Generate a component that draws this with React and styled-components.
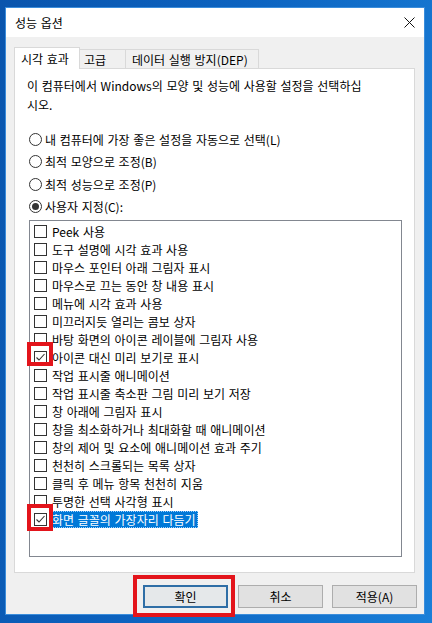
import styled, { createGlobalStyle } from 'styled-components';

const GlobalStyle = createGlobalStyle`
  html, body {
    margin: 0;
    padding: 0;
  }
  body {
    font-family: "Noto Sans CJK KR", "Malgun Gothic", sans-serif;
    font-size: 12px;
    word-spacing: 1px;
    color: #000;
  }
`

const Stage = styled.div`
  position: relative;
  width: 432px;
  height: 623px;
  box-sizing: border-box;
  padding: 7px 7px 0 5px;
  background: linear-gradient(100deg, #0a55ad 0%, #0c63c0 45%, #1a7fd8 100%);
  overflow: hidden;
`

const Window = styled.div`
  width: 420px;
  height: 608px;
  box-sizing: border-box;
  border: 1px solid #3b8ddb;
  background: #f0f0f0;
  display: flex;
  flex-direction: column;
`

const TitleBar = styled.div`
  height: 29px;
  flex: none;
  background: #fff;
  display: flex;
  align-items: center;
  justify-content: space-between;
  padding: 0 9px;
`

const Body = styled.div`
  flex: 1;
  display: flex;
  flex-direction: column;
  padding: 10px 9px 6px 8px;
  min-height: 0;
`

const TabRow = styled.div`
  display: flex;
  align-items: flex-start;
  height: 22px;
  margin-bottom: -1px;
  position: relative;
  z-index: 1;
`

const Tab = styled.div`
  box-sizing: border-box;
  width: ${p => p.$w}px;
  height: ${p => (p.$active ? 22 : 19)}px;
  margin-top: ${p => (p.$active ? 0 : 2)}px;
  padding-left: ${p => p.$pad}px;
  display: flex;
  align-items: center;
  border: 1px solid #d9d9d9;
  border-bottom: none;
  border-left: ${p => (p.$first || p.$active ? '1px solid #d9d9d9' : 'none')};
  background: ${p => (p.$active ? '#fff' : '#f0f0f0')};
  white-space: nowrap;
`

const Panel = styled.div`
  flex: 1;
  box-sizing: border-box;
  border: 1px solid #d9d9d9;
  background: #fff;
  padding: 7px 12px 0 12px;
  display: flex;
  flex-direction: column;
  min-height: 0;
`

const Desc = styled.p`
  margin: 0;
  line-height: 19px;
`

const RadioGroup = styled.div`
  margin: 14px 0 0 2px;
  display: flex;
  flex-direction: column;
`

const RadioRow = styled.label`
  height: 22.5px;
  display: flex;
  align-items: center;
  gap: 3px;
`

const RadioCircle = styled.span`
  width: 13px;
  height: 13px;
  box-sizing: border-box;
  border: 1px solid #333;
  border-radius: 50%;
  background: #fff;
  display: flex;
  align-items: center;
  justify-content: center;
  &::after {
    content: '';
    display: ${p => (p.$on ? 'block' : 'none')};
    width: 7px;
    height: 7px;
    border-radius: 50%;
    background: #333;
  }
`

const ListBox = styled.div`
  margin: 2px 0 0 2px;
  width: 373px;
  height: 337px;
  box-sizing: border-box;
  border: 1px solid #828790;
  padding-top: 1px;
  background: #fff;
`

const ItemRow = styled.div`
  height: 18px;
  display: flex;
  align-items: center;
  padding-left: 4px;
  gap: 5px;
`

const CheckBox = styled.span`
  flex: none;
  width: 13px;
  height: 13px;
  box-sizing: border-box;
  border: 1px solid #333;
  background: #fff;
  display: flex;
  align-items: center;
  justify-content: center;
`

const ItemLabel = styled.span`
  height: 17px;
  display: flex;
  align-items: center;
  white-space: nowrap;
  margin-left: ${p => (p.$sel ? -1 : 0)}px;
  padding: 0 ${p => (p.$sel ? 2 : 0)}px 0 ${p => (p.$sel ? 1 : 0)}px;
  background: ${p => (p.$sel ? '#0078d7' : 'transparent')};
  color: ${p => (p.$sel ? '#fff' : '#000')};
  outline: ${p => (p.$sel ? '1px dotted #9fd0ff' : 'none')};
  outline-offset: -1px;
`

const ButtonRow = styled.div`
  margin: 12px -2px 0 0;
  height: 23px;
  display: flex;
  justify-content: flex-end;
  gap: 10px;
`

const Button = styled.button`
  width: 85px;
  height: 23px;
  box-sizing: border-box;
  font: inherit;
  word-spacing: inherit;
  color: #000;
  background: ${p => (p.$default ? '#e5e8ea' : '#e1e1e1')};
  border: ${p => (p.$default ? '2px solid #2f6ea6' : '1px solid #adadad')};
  padding: 0;
  &:last-child { margin-left: -1px; }
`

const Marker = styled.div`
  position: absolute;
  box-sizing: border-box;
  left: ${p => p.$x}px;
  top: ${p => p.$y}px;
  width: ${p => p.$w}px;
  height: ${p => p.$h}px;
  border: 4px solid #e3141b;
  pointer-events: none;
`

function CloseIcon(){
  return (
    <svg width="11" height="11" viewBox="0 0 11 11">
      <path d="M0.5 0.5 L10.5 10.5 M10.5 0.5 L0.5 10.5" stroke="#111" strokeWidth="1" />
    </svg>
  )
}

function Check(){
  return (
    <svg width="11" height="11" viewBox="0 0 11 11">
      <path d="M1.5 5.5 L4 8 L9.5 2" fill="none" stroke="#333" strokeWidth="1.1" />
    </svg>
  )
}

const radios = [
  { text: '내 컴퓨터에 가장 좋은 설정을 자동으로 선택(L)', on: false },
  { text: '최적 모양으로 조정(B)', on: false },
  { text: '최적 성능으로 조정(P)', on: false },
  { text: '사용자 지정(C):', on: true },
]

const items = [
  { text: 'Peek 사용' },
  { text: '도구 설명에 시각 효과 사용' },
  { text: '마우스 포인터 아래 그림자 표시' },
  { text: '마우스로 끄는 동안 창 내용 표시' },
  { text: '메뉴에 시각 효과 사용' },
  { text: '미끄러지듯 열리는 콤보 상자' },
  { text: '바탕 화면의 아이콘 레이블에 그림자 사용' },
  { text: '아이콘 대신 미리 보기로 표시', checked: true },
  { text: '작업 표시줄 애니메이션' },
  { text: '작업 표시줄 축소판 그림 미리 보기 저장' },
  { text: '창 아래에 그림자 표시' },
  { text: '창을 최소화하거나 최대화할 때 애니메이션' },
  { text: '창의 제어 및 요소에 애니메이션 효과 주기' },
  { text: '천천히 스크롤되는 목록 상자' },
  { text: '클릭 후 메뉴 항목 천천히 지움' },
  { text: '투명한 선택 사각형 표시' },
  { text: '화면 글꼴의 가장자리 다듬기', checked: true, selected: true },
]

export default function App(){
  return (
    <Stage>
      <GlobalStyle />
      <Window>
        <TitleBar>
          <span>성능 옵션</span>
          <CloseIcon />
        </TitleBar>
        <Body>
          <TabRow>
            <Tab $active $w={66} $pad={6}>시각 효과</Tab>
            <Tab $w={46} $pad={4}>고급</Tab>
            <Tab $w={133} $pad={6}>데이터 실행 방지(DEP)</Tab>
          </TabRow>
          <Panel>
            <Desc>이 컴퓨터에서 Windows의 모양 및 성능에 사용할 설정을 선택하십<br />시오.</Desc>
            <RadioGroup>
              {radios.map(r => (
                <RadioRow key={r.text}>
                  <RadioCircle $on={r.on} />
                  <span>{r.text}</span>
                </RadioRow>
              ))}
            </RadioGroup>
            <ListBox>
              {items.map(it => (
                <ItemRow key={it.text}>
                  <CheckBox>{it.checked && <Check />}</CheckBox>
                  <ItemLabel $sel={it.selected}>{it.text}</ItemLabel>
                </ItemRow>
              ))}
            </ListBox>
          </Panel>
          <ButtonRow>
            <Button $default>확인</Button>
            <Button>취소</Button>
            <Button>적용(A)</Button>
          </ButtonRow>
        </Body>
      </Window>
      <Marker $x={27} $y={342} $w={26} $h={24} />
      <Marker $x={27} $y={504} $w={26} $h={27} />
      <Marker $x={133} $y={575} $w={102} $h={42} />
    </Stage>
  )
}
